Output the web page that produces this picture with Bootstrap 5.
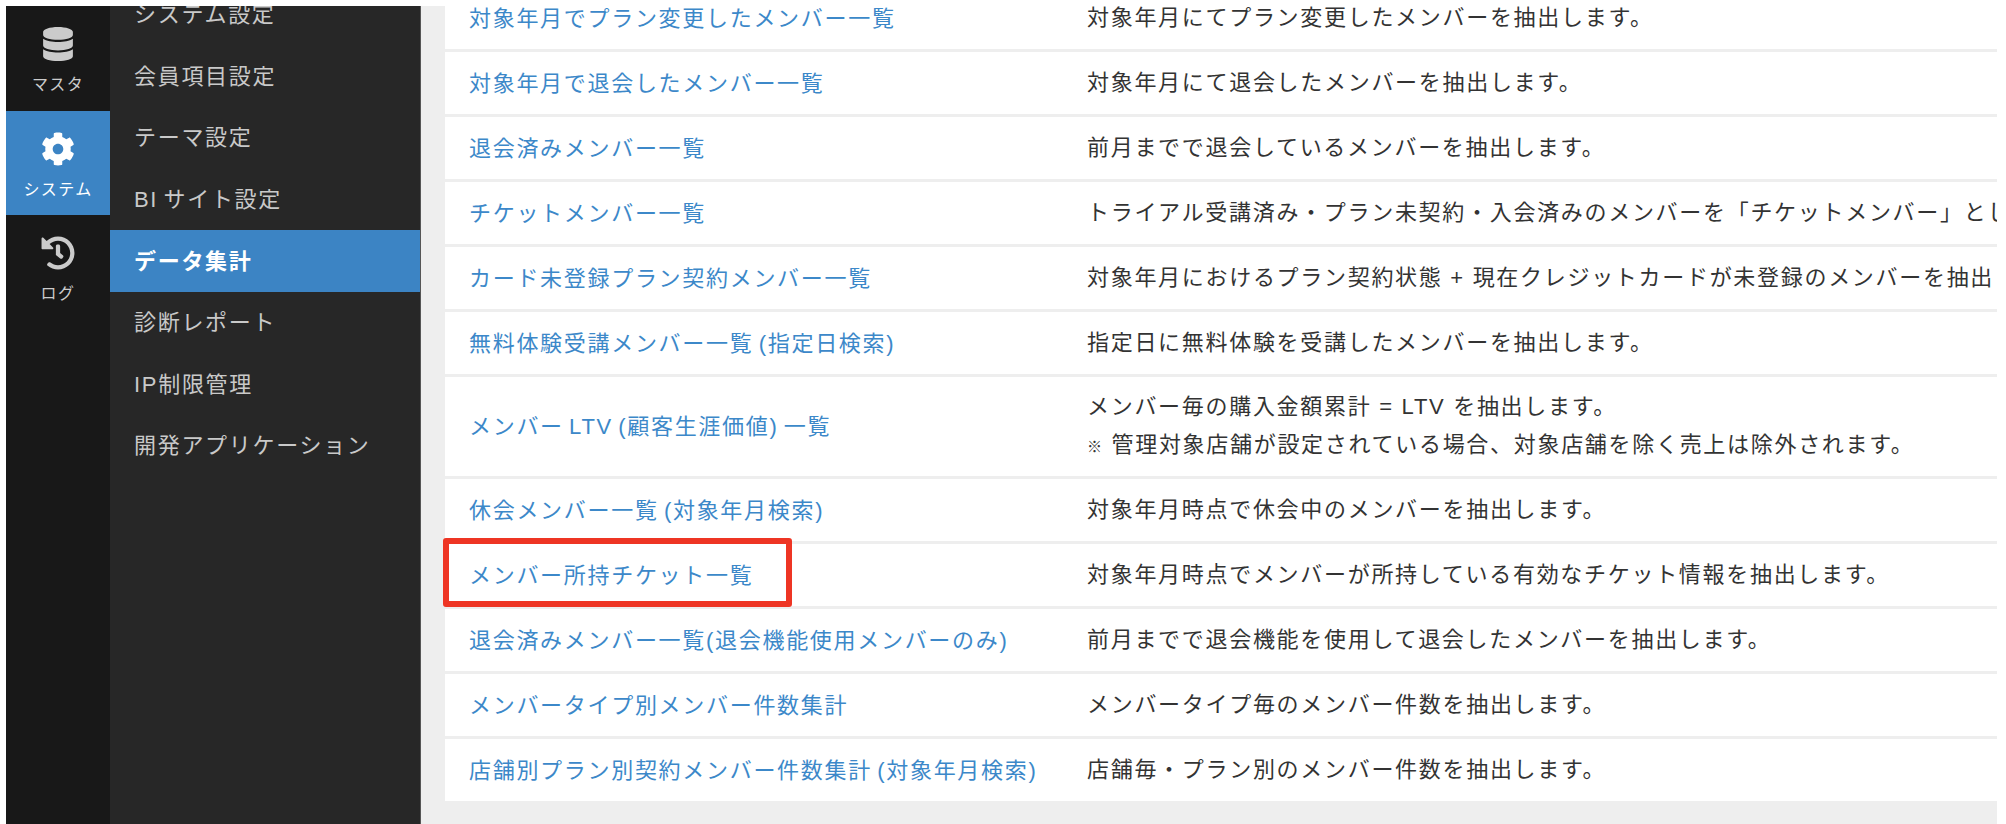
<!DOCTYPE html>
<html lang="ja">
<head>
  <meta charset="UTF-8">
  <title>データ集計</title>
  <link rel="stylesheet" href="https://cdn.jsdelivr.net/npm/bootstrap@5.3.0/dist/css/bootstrap.min.css">
  <style>
    html, body { height: 100%; }
    body {
      background: #fff;
      padding: 6px 0 0 6px;
      overflow: hidden;
      font-family: "Liberation Sans", "Noto Sans CJK JP", sans-serif;
      font-size: 22px;
      letter-spacing: 1.7px;
    }
    .app-window { width: 1991px; height: 818px; overflow: hidden; }
    .icon-rail { width: 104px; background: #181818; color: #cbcbcb; }
    .rail-item { height: 104px; padding-top: 21px; font-size: 16px; line-height: 20px; letter-spacing: 1.4px; }
    .rail-item:first-child { height: 105px; }
    .rail-item svg { height: 34px; width: 34px; margin-bottom: 14px; display: block; }
    .rail-item.is-active { background: #3c84c4; color: #fff; }
    .sub-menu { width: 311px; background: #272727; color: #c9c9c9; border-right: 1px solid #555; word-spacing: -2.5px; }
    .sub-list { margin-top: -22px; }
    .sub-item { height: 61.6px; padding-left: 24px; }
    .sub-item.is-active { background: #3c84c4; color: #fff; font-weight: 700; }
    .content-area { background: #eee; min-width: 0; padding-left: 24px; }
    .report-list { margin-top: -19px; gap: 3px; }
    .report-row { background: #fff; min-height: 62px; white-space: nowrap; }
    .report-row.is-tall { min-height: 99px; }
    .report-name { width: 642px; flex: none; padding-left: 24px; color: #3c88c9; word-spacing: -2.5px; }
    .report-desc { color: #333; line-height: 38px; }
    .note-sign { font-size: 15px; }
    .mark-box {
      position: absolute; left: -2px; top: -6px; width: 349px; height: 69px;
      border: 6px solid #ee3524; border-radius: 3px;
    }
  </style>
</head>
<body>
  <div class="app-window d-flex">
    <div class="icon-rail flex-shrink-0">
      <div class="rail-item d-flex flex-column align-items-center">
        <svg viewBox="0 0 448 512" fill="currentColor"><path d="M448 73.143v45.714C448 159.143 347.667 192 224 192S0 159.143 0 118.857V73.143C0 32.857 100.333 0 224 0s224 32.857 224 73.143zM448 176v102.857C448 319.143 347.667 352 224 352S0 319.143 0 278.857V176c48.125 33.143 136.208 48.572 224 48.572S399.874 209.143 448 176zm0 160v102.857C448 479.143 347.667 512 224 512S0 479.143 0 438.857V336c48.125 33.143 136.208 48.572 224 48.572S399.874 369.143 448 336z"/></svg>
        <span>マスタ</span>
      </div>
      <div class="rail-item is-active d-flex flex-column align-items-center">
        <svg viewBox="0 0 512 512" fill="currentColor"><path d="M487.400 315.700l-42.600-24.600c4.300-23.200 4.300-47 0-70.200l42.600-24.600c4.900-2.800 7.100-8.600 5.500-14-11.100-35.600-30-67.800-54.700-94.600-3.800-4.100-10-5.100-14.800-2.300L380.800 110c-17.900-15.400-38.500-27.300-60.800-35.100V25.800c0-5.600-3.900-10.500-9.400-11.700-36.700-8.200-74.300-7.800-109.200 0-5.500 1.200-9.400 6.100-9.400 11.700V75c-22.200 7.900-42.800 19.800-60.800 35.100L88.700 85.500c-4.900-2.800-11-1.900-14.800 2.300-24.700 26.700-43.600 58.900-54.700 94.600-1.700 5.400.6 11.200 5.500 14L67.300 221c-4.300 23.200-4.300 47 0 70.200l-42.600 24.600c-4.900 2.800-7.100 8.600-5.500 14 11.100 35.600 30 67.800 54.700 94.600 3.800 4.100 10 5.100 14.800 2.300l42.600-24.600c17.900 15.400 38.500 27.300 60.800 35.100v49.200c0 5.600 3.900 10.500 9.400 11.700 36.700 8.200 74.300 7.800 109.200 0 5.500-1.200 9.400-6.100 9.400-11.700v-49.200c22.200-7.900 42.800-19.800 60.800-35.100l42.600 24.600c4.900 2.800 11 1.900 14.800-2.300 24.700-26.700 43.600-58.900 54.700-94.600 1.500-5.500-.7-11.300-5.600-14.100zM256 336c-44.100 0-80-35.900-80-80s35.900-80 80-80 80 35.900 80 80-35.900 80-80 80z"/></svg>
        <span>システム</span>
      </div>
      <div class="rail-item d-flex flex-column align-items-center">
        <svg viewBox="0 0 512 512" fill="currentColor"><path d="M504 255.531c.253 136.640-111.180 248.372-247.820 248.468-59.015.042-113.223-20.530-155.822-54.911-11.077-8.940-11.905-25.541-1.839-35.607l11.267-11.267c8.609-8.609 22.353-9.551 31.891-1.984C173.062 425.135 212.781 440 256 440c101.705 0 184-82.311 184-184 0-101.705-82.311-184-184-184-48.814 0-93.149 18.969-126.068 49.932l50.754 50.754c10.080 10.080 2.941 27.314-11.313 27.314H24c-8.837 0-16-7.163-16-16V38.627c0-14.254 17.234-21.393 27.314-11.314l49.372 49.372C129.209 34.136 189.552 8 256 8c136.810 0 247.747 110.780 248 247.531zm-180.912 78.784l9.823-12.630c8.138-10.463 6.253-25.542-4.210-33.679L288 256.349V152c0-13.255-10.745-24-24-24h-16c-13.255 0-24 10.745-24 24v135.651l65.409 50.874c10.463 8.137 25.541 6.253 33.679-4.210z"/></svg>
        <span>ログ</span>
      </div>
    </div>

    <div class="sub-menu flex-shrink-0 overflow-hidden">
      <div class="sub-list">
        <div class="sub-item d-flex align-items-center">システム設定</div>
        <div class="sub-item d-flex align-items-center">会員項目設定</div>
        <div class="sub-item d-flex align-items-center">テーマ設定</div>
        <div class="sub-item d-flex align-items-center">BI サイト設定</div>
        <div class="sub-item is-active d-flex align-items-center">データ集計</div>
        <div class="sub-item d-flex align-items-center">診断レポート</div>
        <div class="sub-item d-flex align-items-center">IP制限管理</div>
        <div class="sub-item d-flex align-items-center">開発アプリケーション</div>
      </div>
    </div>

    <div class="content-area flex-grow-1 overflow-hidden">
      <div class="report-list d-flex flex-column">
        <div class="report-row d-flex align-items-center"><div class="report-name">対象年月でプラン変更したメンバー一覧</div><div class="report-desc">対象年月にてプラン変更したメンバーを抽出します。</div></div>
        <div class="report-row d-flex align-items-center"><div class="report-name">対象年月で退会したメンバー一覧</div><div class="report-desc">対象年月にて退会したメンバーを抽出します。</div></div>
        <div class="report-row d-flex align-items-center"><div class="report-name">退会済みメンバー一覧</div><div class="report-desc">前月までで退会しているメンバーを抽出します。</div></div>
        <div class="report-row d-flex align-items-center"><div class="report-name">チケットメンバー一覧</div><div class="report-desc">トライアル受講済み・プラン未契約・入会済みのメンバーを「チケットメンバー」とし</div></div>
        <div class="report-row d-flex align-items-center"><div class="report-name">カード未登録プラン契約メンバー一覧</div><div class="report-desc">対象年月におけるプラン契約状態 + 現在クレジットカードが未登録のメンバーを抽出</div></div>
        <div class="report-row d-flex align-items-center"><div class="report-name">無料体験受講メンバー一覧 (指定日検索)</div><div class="report-desc">指定日に無料体験を受講したメンバーを抽出します。</div></div>
        <div class="report-row is-tall d-flex align-items-center"><div class="report-name">メンバー LTV (顧客生涯価値) 一覧</div><div class="report-desc">メンバー毎の購入金額累計 = LTV を抽出します。<br><span class="note-sign">※</span> 管理対象店舗が設定されている場合、対象店舗を除く売上は除外されます。</div></div>
        <div class="report-row d-flex align-items-center"><div class="report-name">休会メンバー一覧 (対象年月検索)</div><div class="report-desc">対象年月時点で休会中のメンバーを抽出します。</div></div>
        <div class="report-row d-flex align-items-center position-relative"><div class="report-name">メンバー所持チケット一覧</div><div class="report-desc">対象年月時点でメンバーが所持している有効なチケット情報を抽出します。</div><div class="mark-box"></div></div>
        <div class="report-row d-flex align-items-center"><div class="report-name">退会済みメンバー一覧(退会機能使用メンバーのみ)</div><div class="report-desc">前月までで退会機能を使用して退会したメンバーを抽出します。</div></div>
        <div class="report-row d-flex align-items-center"><div class="report-name">メンバータイプ別メンバー件数集計</div><div class="report-desc">メンバータイプ毎のメンバー件数を抽出します。</div></div>
        <div class="report-row d-flex align-items-center"><div class="report-name">店舗別プラン別契約メンバー件数集計 (対象年月検索)</div><div class="report-desc">店舗毎・プラン別のメンバー件数を抽出します。</div></div>
      </div>
    </div>
  </div>
  <script src="https://cdn.jsdelivr.net/npm/bootstrap@5.3.0/dist/js/bootstrap.bundle.min.js"></script>
</body>
</html>
